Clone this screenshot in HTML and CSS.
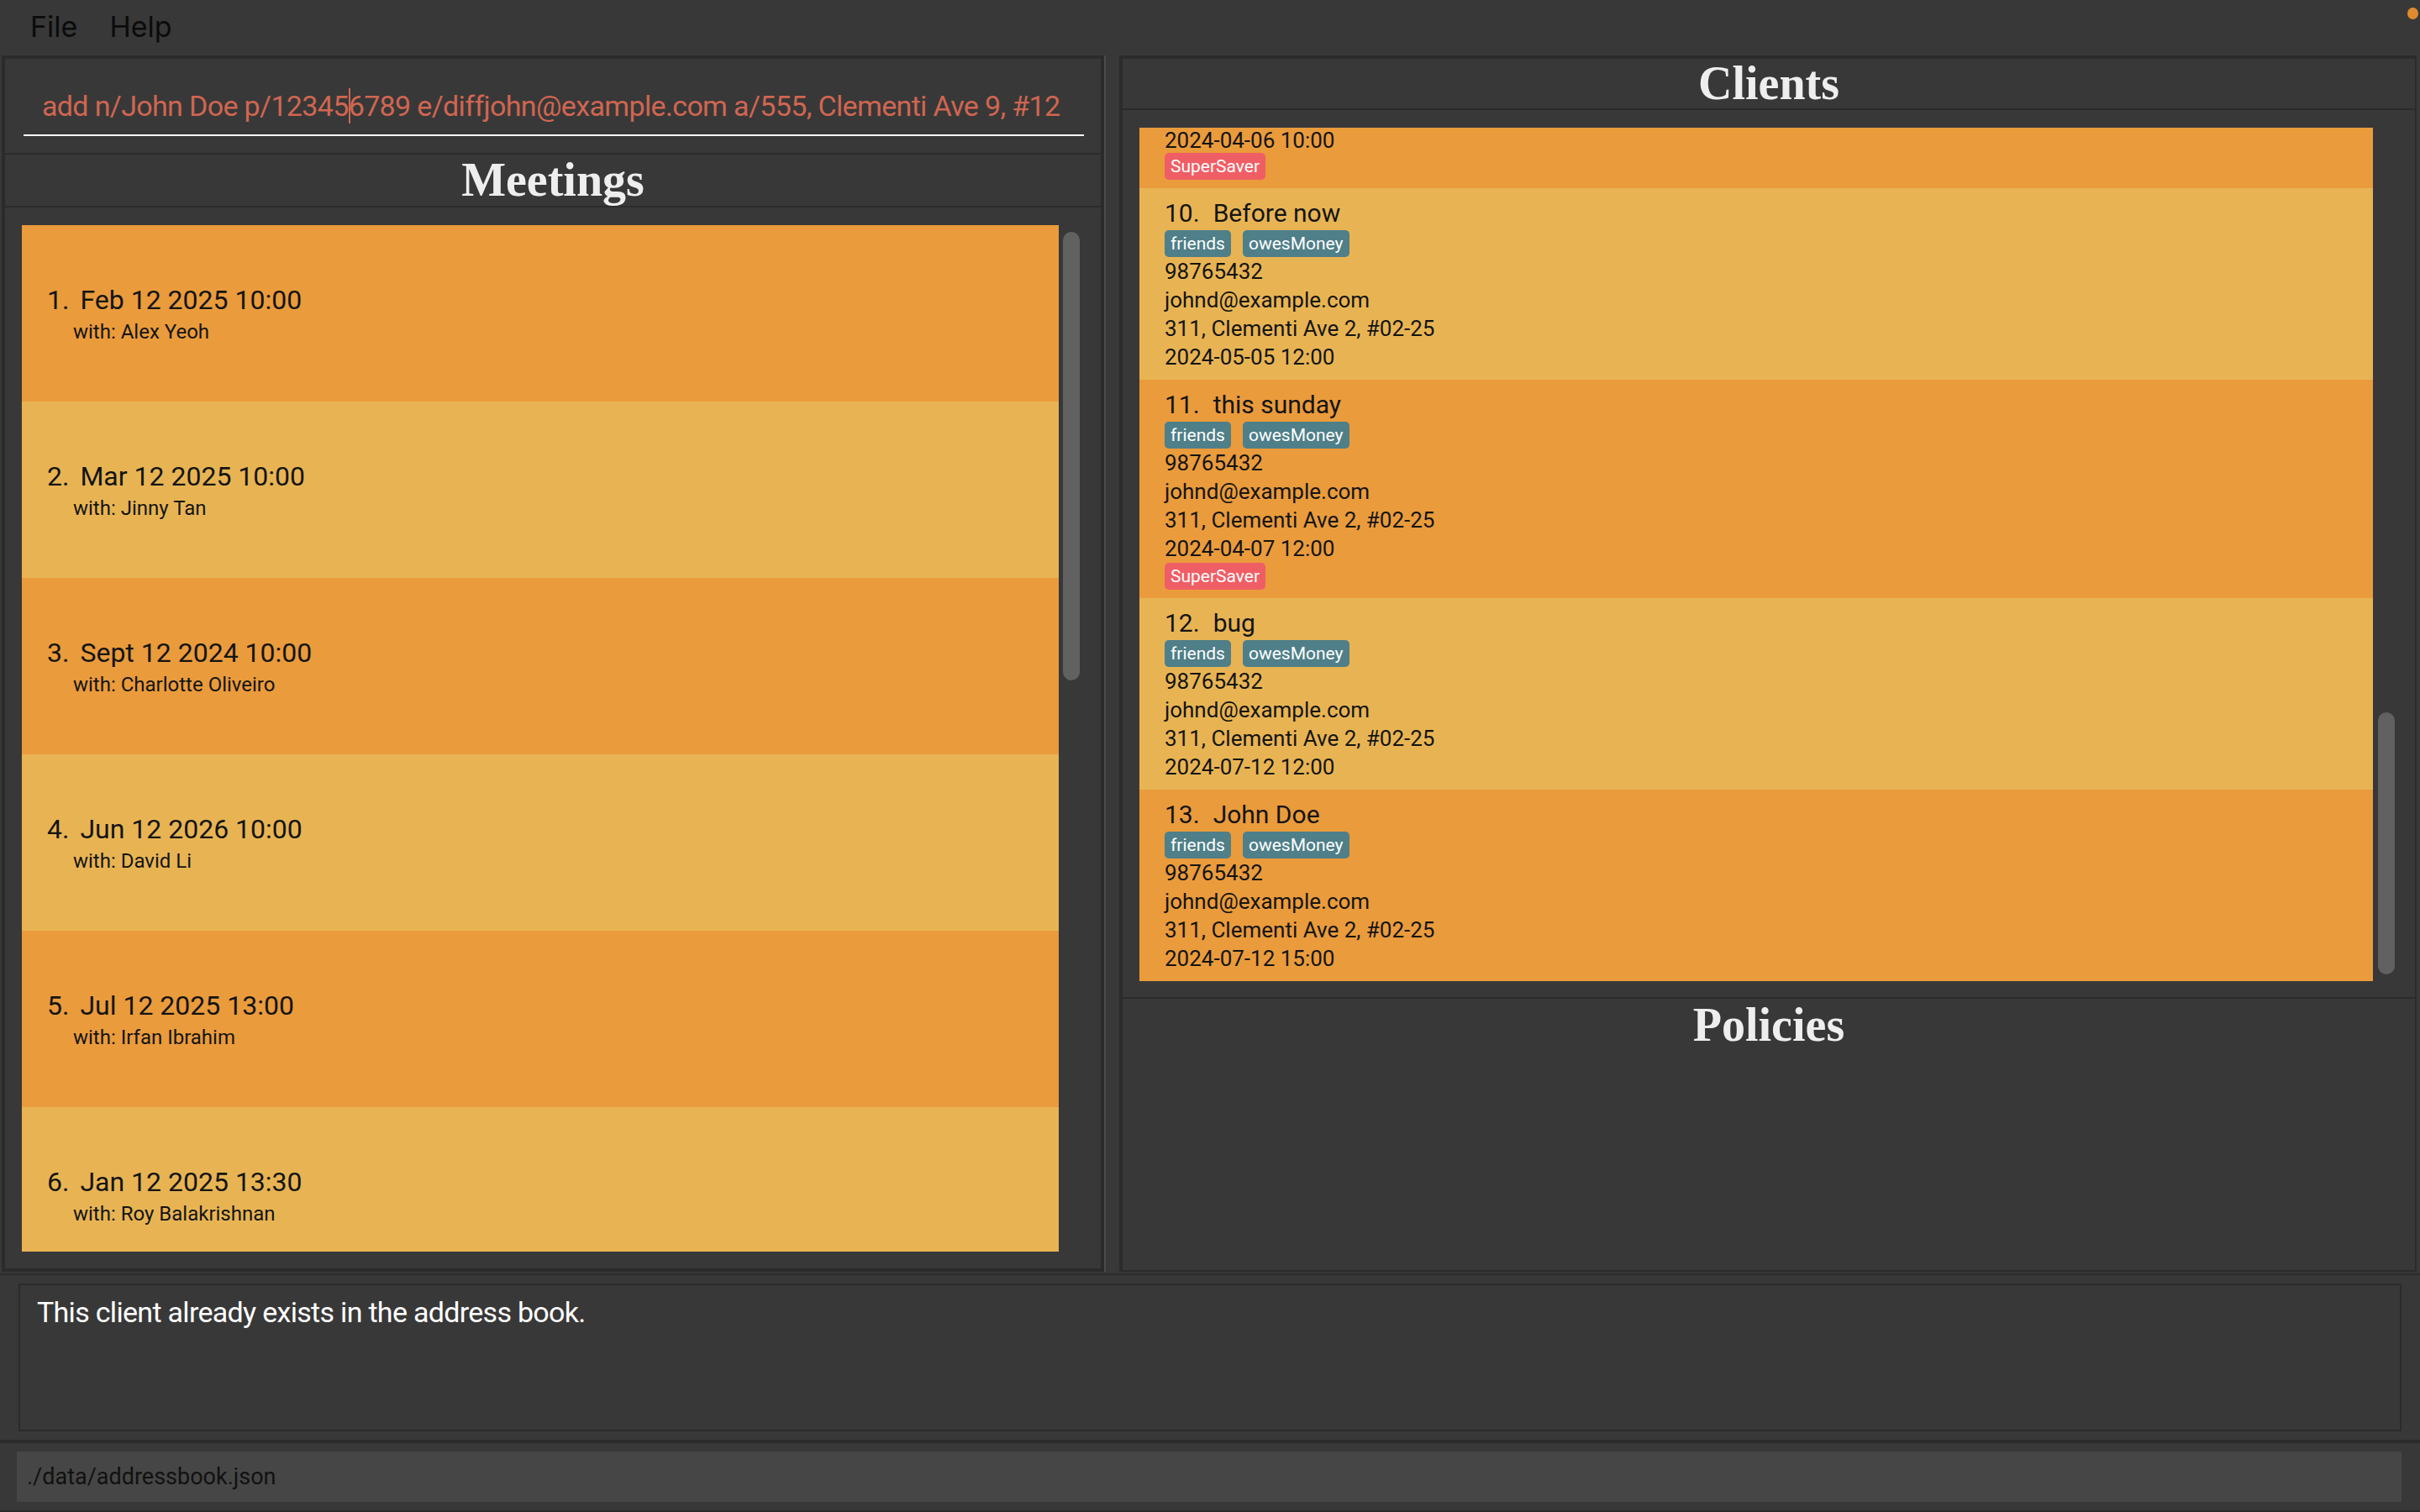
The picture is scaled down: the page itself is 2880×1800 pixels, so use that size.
FILE: index.html
```html
<!DOCTYPE html>
<html>
<head>
<meta charset="utf-8">
<title>Address Book</title>
<link rel="stylesheet" href="styles.css">
</head>
<body>
<div class="app">
  <div class="menubar">
    <span class="menu">File</span>
    <span class="menu">Help</span>
    <span class="dot"></span>
  </div>
  <div class="main">
    <div class="left">
      <div class="cmd-panel">
        <div class="cmd"><span>add n/John Doe p/12345</span><span class="caret"></span><span>6789 e/diffjohn@example.com a/555, Clementi Ave 9, #12</span></div>
      </div>
      <div class="header meetings-header">Meetings</div>
      <div class="list-panel meetings-panel">
        <div class="viewport">
          <div class="list">
            <div class="mcard odd"><div class="mtitle"><span class="id">1.</span><span>Feb 12 2025 10:00</span></div><div class="mwith">with: Alex Yeoh</div></div>
            <div class="mcard even"><div class="mtitle"><span class="id">2.</span><span>Mar 12 2025 10:00</span></div><div class="mwith">with: Jinny Tan</div></div>
            <div class="mcard odd"><div class="mtitle"><span class="id">3.</span><span>Sept 12 2024 10:00</span></div><div class="mwith">with: Charlotte Oliveiro</div></div>
            <div class="mcard even"><div class="mtitle"><span class="id">4.</span><span>Jun 12 2026 10:00</span></div><div class="mwith">with: David Li</div></div>
            <div class="mcard odd"><div class="mtitle"><span class="id">5.</span><span>Jul 12 2025 13:00</span></div><div class="mwith">with: Irfan Ibrahim</div></div>
            <div class="mcard even"><div class="mtitle"><span class="id">6.</span><span>Jan 12 2025 13:30</span></div><div class="mwith">with: Roy Balakrishnan</div></div>
          </div>
          <div class="track meetings-track"><div class="thumb"></div></div>
        </div>
      </div>
    </div>
    <div class="divider"></div>
    <div class="right">
      <div class="header clients-header">Clients</div>
      <div class="list-panel clients-panel">
        <div class="viewport">
          <div class="list">
            <div class="ccard odd partial">
              <div class="line first">2024-04-06 10:00</div>
              <div class="tags"><span class="tag red">SuperSaver</span></div>
            </div>
            <div class="ccard even">
              <div class="ctitle"><span class="id">10.</span><span>Before now</span></div>
              <div class="tags"><span class="tag">friends</span><span class="tag">owesMoney</span></div>
              <div class="line">98765432</div>
              <div class="line">johnd@example.com</div>
              <div class="line">311, Clementi Ave 2, #02-25</div>
              <div class="line">2024-05-05 12:00</div>
            </div>
            <div class="ccard odd">
              <div class="ctitle"><span class="id">11.</span><span>this sunday</span></div>
              <div class="tags"><span class="tag">friends</span><span class="tag">owesMoney</span></div>
              <div class="line">98765432</div>
              <div class="line">johnd@example.com</div>
              <div class="line">311, Clementi Ave 2, #02-25</div>
              <div class="line">2024-04-07 12:00</div>
              <div class="tags"><span class="tag red">SuperSaver</span></div>
            </div>
            <div class="ccard even">
              <div class="ctitle"><span class="id">12.</span><span>bug</span></div>
              <div class="tags"><span class="tag">friends</span><span class="tag">owesMoney</span></div>
              <div class="line">98765432</div>
              <div class="line">johnd@example.com</div>
              <div class="line">311, Clementi Ave 2, #02-25</div>
              <div class="line">2024-07-12 12:00</div>
            </div>
            <div class="ccard odd">
              <div class="ctitle"><span class="id">13.</span><span>John Doe</span></div>
              <div class="tags"><span class="tag">friends</span><span class="tag">owesMoney</span></div>
              <div class="line">98765432</div>
              <div class="line">johnd@example.com</div>
              <div class="line">311, Clementi Ave 2, #02-25</div>
              <div class="line">2024-07-12 15:00</div>
            </div>
          </div>
          <div class="track clients-track"><div class="thumb"></div></div>
        </div>
      </div>
      <div class="policies-panel">
        <div class="header policies-header">Policies</div>
      </div>
    </div>
  </div>
  <div class="result-panel">
    <div class="result">This client already exists in the address book.</div>
  </div>
  <div class="status-panel">
    <div class="status">./data/addressbook.json</div>
  </div>
</div>
</body>
</html>
```

FILE: styles.css
```css
* { box-sizing: border-box; }

html, body {
  margin: 0;
  padding: 0;
}

body {
  width: 2880px;
  height: 1800px;
  overflow: hidden;
  background: #383838;
  font-family: Roboto, "Noto Sans", "Liberation Sans", sans-serif;
}

.app {
  display: flex;
  flex-direction: column;
  height: 1800px;
}

/* menu bar */
.menubar {
  height: 66px;
  flex: none;
  display: flex;
  align-items: center;
  gap: 38px;
  padding-left: 36px;
  overflow: hidden;
}

.menu {
  font-family: Inter, Roboto, sans-serif;
  font-size: 34px;
  line-height: 40px;
  color: #0b0b0b;
  margin-top: -2px;
}

.dot {
  margin-left: auto;
  margin-right: 2px;
  align-self: flex-start;
  margin-top: 9px;
  width: 13px;
  height: 14px;
  border-radius: 50%;
  background: #e08a30;
}

/* main split */
.main {
  height: 1448px;
  flex: none;
  display: flex;
}

.left {
  width: 1312px;
  margin-left: 2px;
  display: flex;
  flex-direction: column;
}

.divider {
  width: 2px;
  background: #4a4a4a;
}

.right {
  flex: 1;
  padding-left: 16px;
  padding-right: 4px;
  display: flex;
  flex-direction: column;
}

/* command box */
.cmd-panel {
  flex: none;
  border: solid #2b2b2b;
  border-width: 4px 4px 2px 4px;
  padding: 35px 20px 20px 22px;
}

.cmd {
  font-size: 34px;
  line-height: 42px;
  letter-spacing: -0.65px;
  color: #d06651;
  padding: 0 0 13px 22px;
  border-bottom: 2px solid #ffffff;
  white-space: nowrap;
  overflow: hidden;
}

.caret {
  display: inline-block;
  width: 2px;
  height: 42px;
  margin-right: -2px;
  vertical-align: top;
  background: #d06651;
}

/* section headers */
.header {
  flex: none;
  font-family: "Liberation Serif", "Times New Roman", serif;
  font-weight: bold;
  font-size: 56px;
  line-height: 61px;
  color: #eeeeee;
  text-align: center;
}

.meetings-header {
  border: solid #2b2b2b;
  border-width: 0 4px 2px 4px;
}

.clients-header {
  border: solid #2b2b2b;
  border-width: 4px 2px 2px 4px;
  line-height: 59px;
}

.policies-header {
  line-height: 62px;
}

/* list panels */
.list-panel {
  display: flex;
  min-height: 0;
  border: solid #2b2b2b;
}

.meetings-panel {
  flex: 1;
  border-width: 0 4px 4px 4px;
  padding: 21px 20px 20px 20px;
}

.clients-panel {
  height: 1058px;
  flex: none;
  border-width: 0 2px 2px 4px;
  padding: 21px 20px 19px 20px;
}

.policies-panel {
  flex: 1;
  border: solid #2b2b2b;
  border-width: 0 2px 2px 4px;
}

.viewport {
  flex: 1;
  display: flex;
  overflow: hidden;
}

.list {
  flex: 1;
  overflow: hidden;
}

.track {
  width: 30px;
  flex: none;
  display: flex;
  flex-direction: column;
}

.thumb {
  width: 20px;
  margin-left: 5px;
  border-radius: 10px;
  background: #616161;
}

.meetings-track {
  padding-top: 8px;
}

.meetings-track .thumb {
  height: 534px;
}

.clients-track {
  justify-content: flex-end;
  padding-bottom: 8px;
}

.clients-track .thumb {
  margin-left: 6px;
  height: 312px;
}

.odd { background: #ea9b3c; }
.even { background: #e8b453; }

/* meeting cards */
.mcard {
  height: 210px;
  display: flex;
  flex-direction: column;
  justify-content: center;
  gap: 4px;
  padding-left: 30px;
  color: #141414;
}

.mtitle {
  display: flex;
  gap: 13px;
  font-size: 32px;
  line-height: 40px;
}

.mwith {
  font-size: 24px;
  line-height: 28px;
  margin-left: 31px;
}

/* client cards */
.ccard {
  padding: 10px 10px 10px 30px;
  color: #141414;
  font-size: 26px;
  line-height: 34px;
}

.ccard.partial {
  padding-top: 0;
}

.line.first {
  line-height: 30px;
}

.ctitle {
  display: flex;
  gap: 16px;
  font-size: 30px;
  line-height: 40px;
}

.tags {
  display: flex;
  gap: 14px;
  height: 32px;
}

.tag {
  font-size: 21px;
  line-height: 28px;
  padding: 2px 7px;
  border-radius: 5px;
  color: #ffffff;
  background: #4f7f89;
}

.tag.red {
  background: #f05e65;
}

/* result display */
.result-panel {
  flex: none;
  margin-top: 2px;
  border-top: 2px solid #2b2b2b;
  border-bottom: 4px solid #2b2b2b;
  padding: 10px 22px;
}

.result {
  height: 176px;
  border: 2px solid #2b2b2b;
  padding: 11px 20px;
  font-size: 34px;
  line-height: 42px;
  letter-spacing: -0.7px;
  color: #ffffff;
}

/* status bar */
.status-panel {
  flex: 1;
  padding: 10px 22px 10px 20px;
  border-bottom: 2px solid #2b2b2b;
}

.status {
  height: 60px;
  background: #464646;
  padding-left: 12px;
  font-size: 27px;
  line-height: 60px;
  color: #111111;
}
```
